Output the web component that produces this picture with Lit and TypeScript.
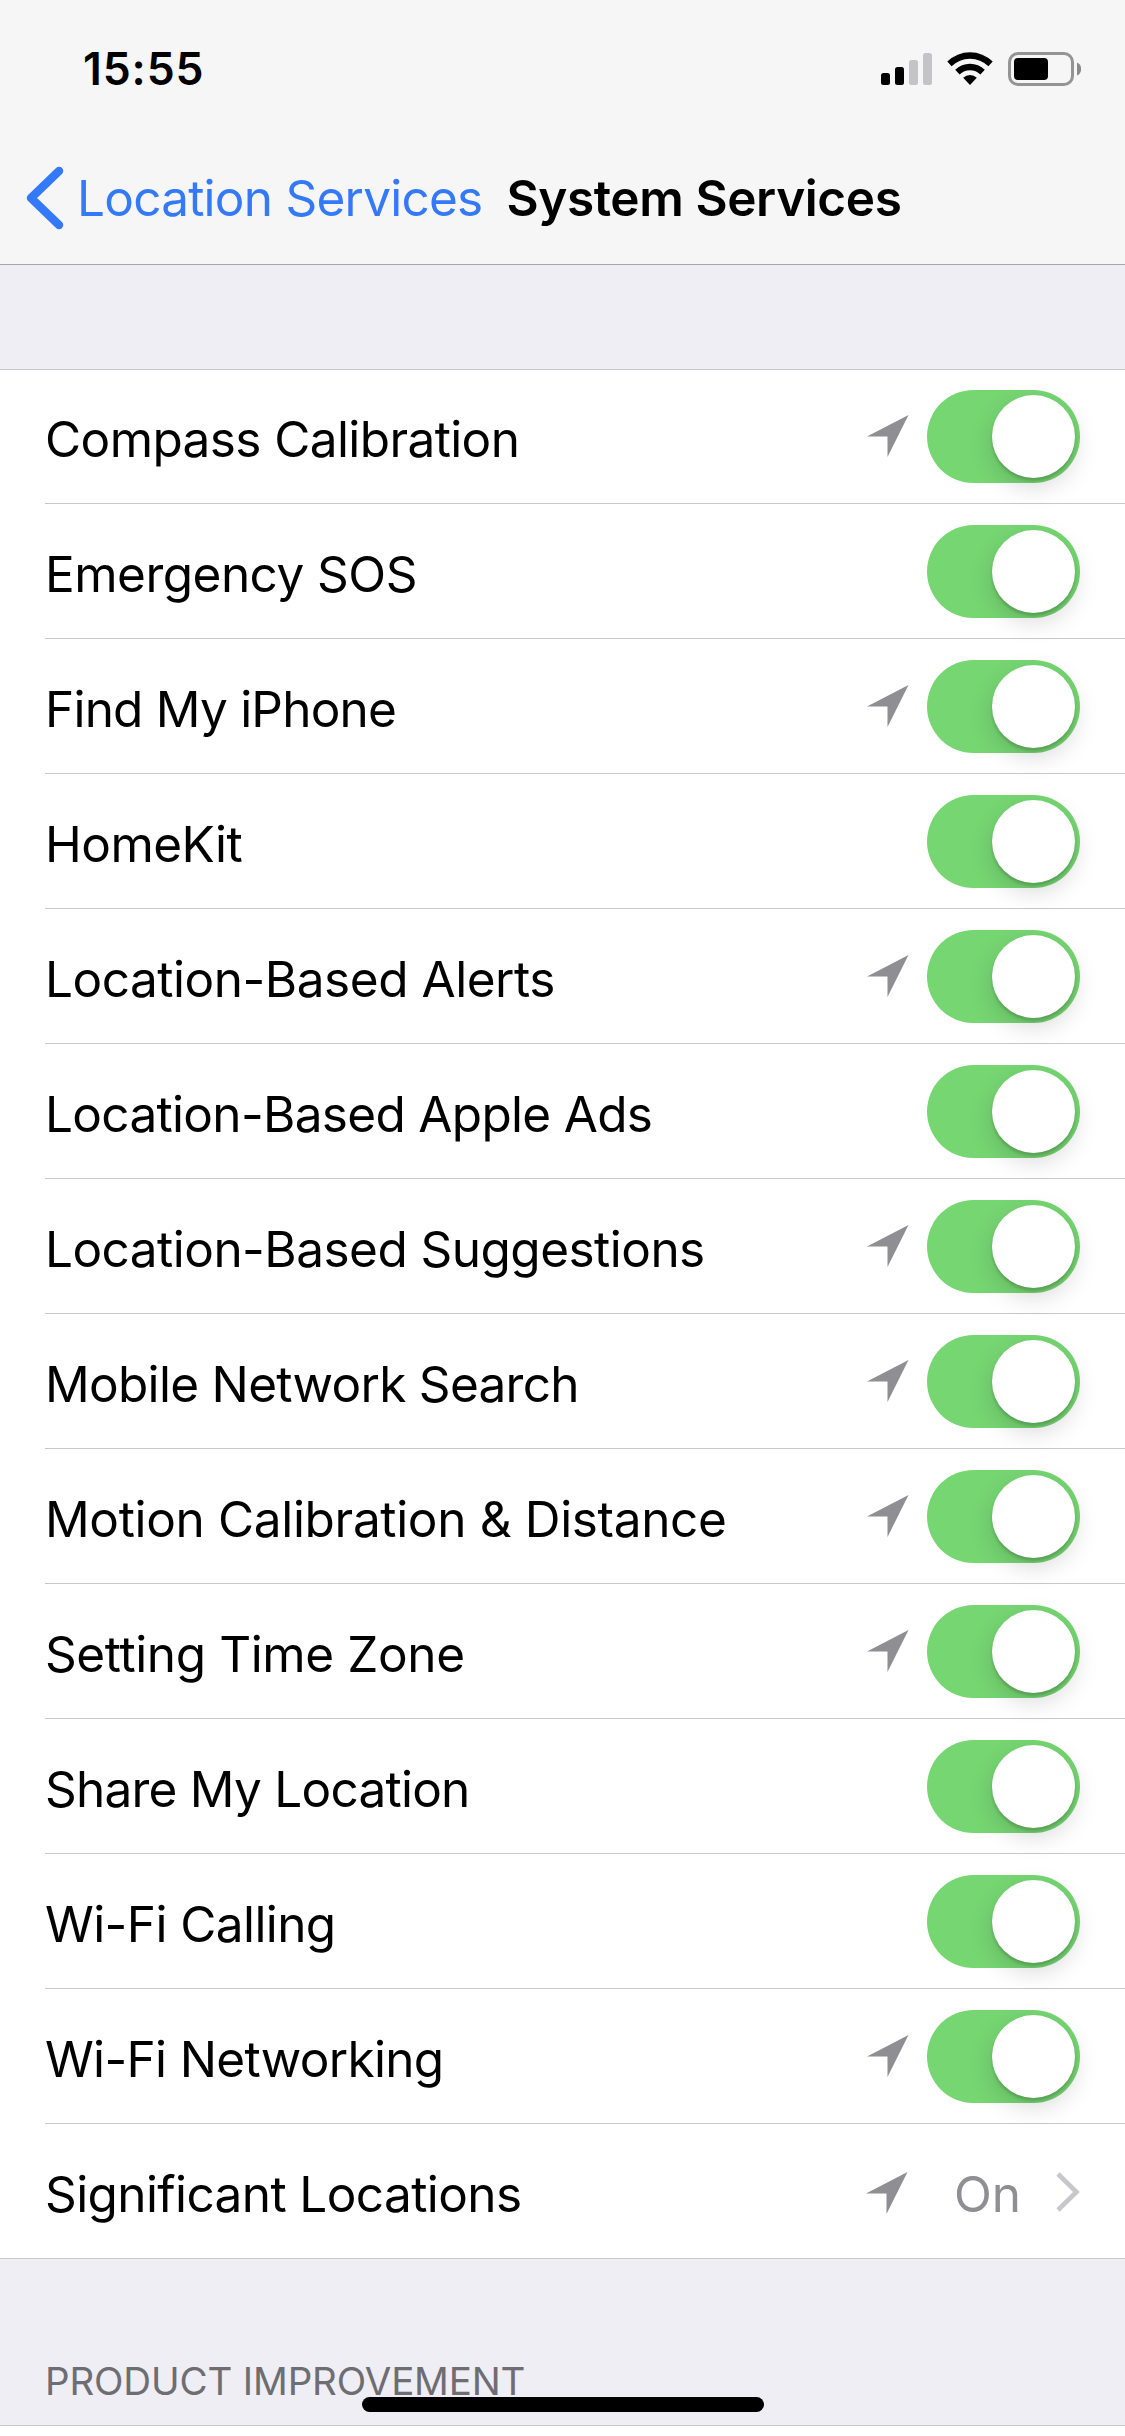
import { LitElement, html, css, nothing } from "lit";
import { customElement, property } from "lit/decorators.js";

interface Service {
  label: string;
  recent: boolean;
  tracking: number;
}

const SERVICES: Service[] = [
  { label: "Compass Calibration", recent: true, tracking: -0.6 },
  { label: "Emergency SOS", recent: false, tracking: -0.52 },
  { label: "Find My iPhone", recent: true, tracking: -0.78 },
  { label: "HomeKit", recent: false, tracking: -0.52 },
  { label: "Location-Based Alerts", recent: true, tracking: -0.47 },
  { label: "Location-Based Apple Ads", recent: false, tracking: -0.68 },
  { label: "Location-Based Suggestions", recent: true, tracking: -0.53 },
  { label: "Mobile Network Search", recent: true, tracking: -0.7 },
  { label: "Motion Calibration & Distance", recent: true, tracking: -0.34 },
  { label: "Setting Time Zone", recent: true, tracking: -0.39 },
  { label: "Share My Location", recent: false, tracking: -0.76 },
  { label: "Wi-Fi Calling", recent: false, tracking: -0.58 },
  { label: "Wi-Fi Networking", recent: true, tracking: -0.67 },
];

@customElement("toggle-switch")
export class ToggleSwitch extends LitElement {
  static styles = css`
    :host {
      display: block;
      flex: none;
    }
    .track {
      display: flex;
      justify-content: flex-end;
      box-sizing: border-box;
      width: 153px;
      height: 93px;
      padding: 5px 5.4px 5px 5px;
      border-radius: 47px;
      background: #76d672;
    }
    .knob {
      width: 83px;
      height: 83px;
      border-radius: 50%;
      background: #fff;
      box-shadow: 0 9px 24px rgba(0, 0, 0, 0.15), 0 3px 3px rgba(0, 0, 0, 0.16);
    }
  `;
  render() {
    return html`<div class="track"><div class="knob"></div></div>`;
  }
}

@customElement("status-bar")
export class StatusBar extends LitElement {
  static styles = css`
    :host {
      display: flex;
      box-sizing: border-box;
      height: 132px;
      padding: 52px 44px 0 83px;
      justify-content: space-between;
      align-items: flex-start;
    }
    .time {
      font-size: 44.5px;
      font-weight: 600;
      line-height: 35px;
      letter-spacing: 0.9px;
    }
    .icons {
      display: block;
      width: 200px;
      height: 34px;
    }
  `;
  render() {
    return html`
      <div class="time">15:55</div>
      <svg class="icons" viewBox="881 52 200 34">
        <rect x="881" y="73" width="9" height="12" rx="2.5" />
        <rect x="895" y="67" width="9" height="18" rx="2.5" />
        <rect x="909" y="60" width="9" height="25" rx="2.5" fill="#c4c4c6" />
        <rect x="923" y="53" width="9" height="32" rx="2.5" fill="#c4c4c6" />
        <path d="M947.3 61.6 A32.5 32.5 0 0 1 992.7 61.6 L988.4 66.2 A26.3 26.3 0 0 0 951.6 66.2 Z" />
        <path d="M955.2 69.8 A21 21 0 0 1 984.8 69.8 L980.4 74.4 A14.8 14.8 0 0 0 959.6 74.4 Z" />
        <path d="M963.2 77.8 A9.8 9.8 0 0 1 976.8 77.8 L970 85 Z" />
        <rect x="1009.5" y="53.5" width="63" height="31" rx="8.5" fill="none" stroke="#949494" stroke-width="3" />
        <rect x="1014" y="58" width="34" height="22" rx="4" />
        <path d="M1077 62.5 A7.2 7.2 0 0 1 1077 75.5 Z" fill="#8a8a8a" />
      </svg>
    `;
  }
}

@customElement("service-row")
export class ServiceRow extends LitElement {
  @property() label = "";
  @property() value = "";
  @property({ type: Number }) tracking = 0;
  @property({ type: Boolean }) recent = false;
  @property({ type: Boolean, reflect: true }) last = false;

  static styles = css`
    :host {
      display: flex;
      box-sizing: border-box;
      height: 135px;
      padding-left: 45px;
    }
    .cell {
      flex: 1;
      display: flex;
      align-items: center;
      box-sizing: border-box;
      padding: 0 45px 0 0;
      border-bottom: 1px solid #c8c7cc;
    }
    :host([last]) .cell {
      border-bottom-color: transparent;
    }
    .label {
      flex: 1;
      padding-top: 5px;
      font-size: 49.5px;
      line-height: 60px;
      white-space: nowrap;
    }
    .arrow {
      display: block;
      width: 42px;
      height: 42px;
      margin-right: 18px;
    }
    :host([last]) .arrow {
      margin-top: 3px;
    }
    .value {
      margin-left: 28px;
      padding-top: 5px;
      font-size: 49.5px;
      line-height: 60px;
      color: #8e8e93;
    }
    .chevron {
      display: block;
      width: 24px;
      height: 40px;
      margin: 1px 0 0 35px;
    }
  `;

  render() {
    return html`
      <div class="cell">
        <div class="label" style="letter-spacing: ${this.tracking}px">${this.label}</div>
        ${this.recent
          ? html`<svg class="arrow" viewBox="0 0 42 42"><path d="M0 21.5 L41.5 0 L20.5 42 V21.5 Z" fill="#8e8e93" /></svg>`
          : nothing}
        ${this.value
          ? html`<div class="value">${this.value}</div>
              <svg class="chevron" viewBox="0 0 24 40">
                <path d="M2 2 L20.5 20 L2 38" fill="none" stroke="#c7c7cc" stroke-width="4.6" />
              </svg>`
          : html`<toggle-switch></toggle-switch>`}
      </div>
    `;
  }
}

@customElement("app-root")
export class AppRoot extends LitElement {
  static styles = css`
    :host {
      display: flex;
      flex-direction: column;
      position: relative;
      width: 1125px;
      height: 2436px;
      overflow: hidden;
      background: #efeef4;
      color: #000;
      font-family: Inter, "Liberation Sans", sans-serif;
    }
    .header {
      box-sizing: border-box;
      flex: none;
      height: 265px;
      background: #f6f6f6;
      border-bottom: 1px solid #a7a7aa;
    }
    .nav {
      display: flex;
      align-items: center;
      height: 132px;
      padding-left: 26px;
      line-height: 60px;
      white-space: nowrap;
    }
    .back {
      display: flex;
      align-items: center;
      color: #3479f7;
      font-size: 49.5px;
      letter-spacing: -0.76px;
    }
    .back-icon {
      display: block;
      width: 38px;
      height: 64px;
      margin-right: 13px;
    }
    .title {
      margin-left: 24px;
      font-size: 49.5px;
      font-weight: 600;
      letter-spacing: -0.4px;
    }
    .group {
      flex: none;
      margin-top: 104px;
      background: #fff;
      box-shadow: inset 0 1px #c8c7cc, inset 0 -1px #c8c7cc;
    }
    .section {
      box-sizing: border-box;
      flex: none;
      height: 166px;
      padding: 99px 0 0 45px;
      font-size: 38.5px;
      line-height: 46px;
      letter-spacing: -0.15px;
      color: #6d6d72;
    }
    .next {
      flex: 1;
      background: #fff;
      border-top: 1px solid #c8c7cc;
    }
    .home {
      position: absolute;
      left: 362px;
      top: 2397px;
      width: 402px;
      height: 15px;
      border-radius: 8px;
      background: #000;
    }
  `;

  render() {
    return html`
      <div class="header">
        <status-bar></status-bar>
        <div class="nav">
          <div class="back">
            <svg class="back-icon" viewBox="0 0 38 64">
              <path
                d="M33 5 L5 32 L33 59"
                fill="none"
                stroke="#3479f7"
                stroke-width="8.5"
                stroke-linecap="round"
                stroke-linejoin="round"
              />
            </svg>
            <span class="back-label">Location Services</span>
          </div>
          <div class="title">System Services</div>
        </div>
      </div>
      <div class="group">
        ${SERVICES.map(
          (s) => html`<service-row .label=${s.label} .recent=${s.recent} .tracking=${s.tracking}></service-row>`
        )}
        <service-row label="Significant Locations" value="On" tracking="-0.6" recent last></service-row>
      </div>
      <div class="section">PRODUCT IMPROVEMENT</div>
      <div class="next"></div>
      <div class="home"></div>
    `;
  }
}
